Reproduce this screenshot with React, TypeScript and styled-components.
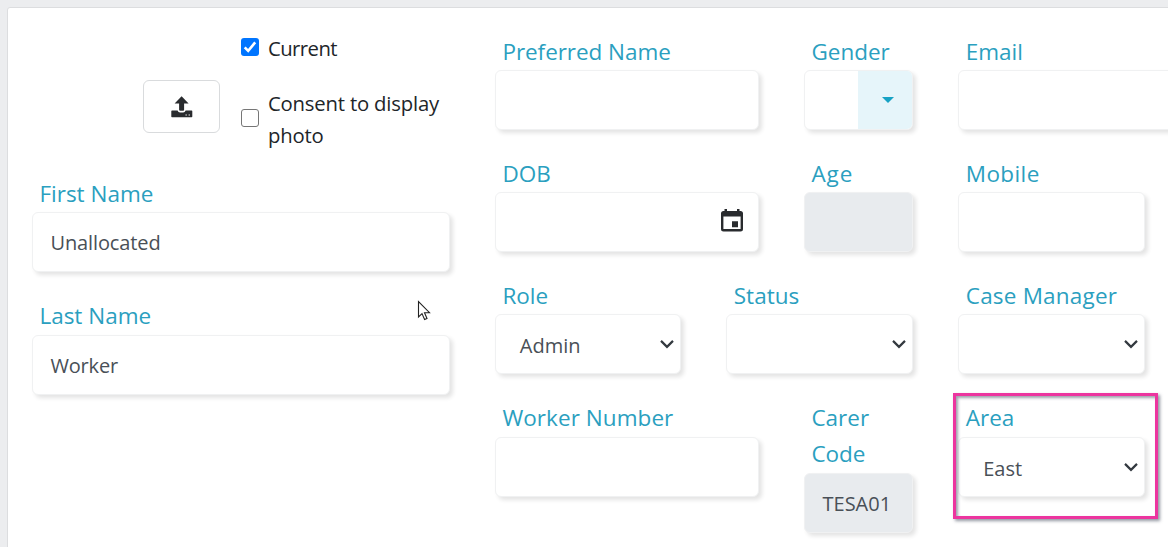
import React from 'react';
import styled, { createGlobalStyle, css } from 'styled-components';

const GlobalStyle = createGlobalStyle`
  * { box-sizing: border-box; }
  body {
    margin: 0;
    background: #ecedef;
    font-family: "Open Sans", "Noto Sans", sans-serif;
    color: #212529;
    overflow: hidden;
  }
`;

const Page = styled.main`
  height: 547px;
  padding: 7px 0 0 7px;
  overflow: hidden;
`;

const Card = styled.section`
  display: flex;
  align-items: flex-start;
  gap: 45px;
  width: 1300px;
  height: 600px;
  padding: 26px 0 0 24px;
  background: #fff;
  border: 1px solid #dcdddf;
  border-radius: 3px;
`;

const LeftColumn = styled.div`
  width: 418px;
  flex: none;
`;

const PhotoRow = styled.div`
  display: flex;
  height: 142px;
  padding-left: 111px;
`;

const UploadButton = styled.button`
  display: flex;
  align-items: center;
  justify-content: center;
  width: 77px;
  height: 53px;
  margin: 46px 21px 0 0;
  padding: 0;
  flex: none;
  background: #fff;
  border: 1px solid #d9dbdd;
  border-radius: 6px;
`;

const Checks = styled.div`
  display: flex;
  flex-direction: column;
  gap: 23px;
  margin-top: -2px;
`;

const CheckLabel = styled.label`
  display: flex;
  align-items: center;
  gap: 9px;
  font-size: 20.3px;
  line-height: 32px;
  width: 210px;
`;

const CheckBox = styled.span<{ $checked?: boolean }>`
  display: flex;
  width: 18px;
  height: 18px;
  flex: none;
  margin-top: -3px;
  border-radius: 3px;
  border: 1.5px solid #767676;
  background: #fff;
  ${p => p.$checked && css`
    background: #0075ff;
    border: 0;
  `}
`;

const Text = styled.span<{ $ls?: number }>`
  letter-spacing: ${p => p.$ls ?? 0}px;
  white-space: nowrap;
`;

const RightColumn = styled.div`
  flex: none;
`;

const Field = styled.div<{ $w: number }>`
  position: relative;
  width: ${p => p.$w}px;
  flex: none;
`;

const Label = styled.div`
  padding: 0 0 0.4px 7.4px;
  font-size: 22.5px;
  line-height: 36px;
  color: #2b9fbf;
`;

const Row = styled.div`
  display: flex;
  align-items: flex-start;
  gap: 45px;
  height: 122px;

  &:last-child ${Label} {
    padding-bottom: 1px;
  }
`;

const Box = styled.div<{ $disabled?: boolean; $indent?: number }>`
  display: flex;
  align-items: center;
  justify-content: space-between;
  height: 60px;
  padding-left: ${p => p.$indent ?? 17.5}px;
  overflow: hidden;
  font-size: 20px;
  color: #495057;
  background: ${p => (p.$disabled ? '#e8ebee' : '#fff')};
  border: 1px solid #f0f1f2;
  border-radius: 6px;
  box-shadow: 3px 3px 4px rgba(0, 0, 0, 0.11);
`;

const Spacer = styled.div`
  height: 26px;
`;

const DropButton = styled.span`
  display: flex;
  align-items: center;
  justify-content: center;
  align-self: stretch;
  width: 54.4px;
  margin-left: auto;
  padding-left: 5.4px;
  background: #e6f5fa;
`;

const IconSlot = styled.span<{ $right: number; $lift?: number }>`
  display: flex;
  margin-left: auto;
  margin-right: ${p => p.$right}px;
  padding-bottom: ${p => p.$lift ?? 0}px;
`;

const Value = styled(Text)`
  padding-top: 1px;
`;

const SelectValue = styled(Text)`
  padding-top: 2px;
`;

const Highlight = styled.div`
  position: absolute;
  left: -5.3px;
  top: -7px;
  width: 205px;
  height: 126px;
  border: 3px solid #ec359f;
  box-shadow: 2px 2px 3px rgba(40, 50, 70, 0.5), inset 2px 2px 3px rgba(40, 50, 70, 0.45);
  pointer-events: none;
`;

const Pointer = styled.svg`
  position: absolute;
  left: 417px;
  top: 300px;
`;

const Chevron = () => (
  <IconSlot $right={5.2}>
    <svg width="16" height="12" viewBox="0 0 16 12">
      <path d="M2 2.9 8 8.9 14 2.9" fill="none" stroke="#343a40" strokeWidth="2.2" />
    </svg>
  </IconSlot>
);

const UploadIcon = () => (
  <svg width="22" height="22" viewBox="0 0 22 22">
    <path fill="#292b2e" d="M10.600 0.300 17.600 7.500H13.100V13.800q0 1-1 1h-3q-1 0-1-1V7.500H3.600Z" />
    <path fill="#292b2e" d="M1 14.500H6.600q.6 2 2.500 2h3q1.900 0 2.500-2H20.600q.7 0 .7.7V20.500q0 .7-.7.7H1q-.7 0-.7-.7V15.200q0-.7.7-.7Z" />
    <path fill="#fff" d="M14.500 18.600h1.300v1h-1.300zM17.600 18.600h1.300v1H17.600z" />
  </svg>
);

const CalendarIcon = () => (
  <svg width="22" height="23" viewBox="0 0 22 23">
    <path fill="#292b2e" fillRule="evenodd" d="M3.5 0H6V2H16V0h2.5V2H19.5Q22 2 22 4.5V20Q22 22.5 19.5 22.5H2.5Q0 22.5 0 20V4.5Q0 2 2.5 2H3.5ZM2.4 7.5V20.1H19.6V7.5Z" />
    <path fill="#292b2e" d="M11 12.3h6v6h-6z" />
  </svg>
);

interface SelectProps {
  label: string;
  width: number;
  value?: string;
  spacing?: number;
  children?: React.ReactNode;
}

const SelectField = ({ label, width, value, spacing, children }: SelectProps) => (
  <Field $w={width}>
    <Label><Text $ls={spacing}>{label}</Text></Label>
    <Box $indent={23.8}>
      {value && <SelectValue>{value}</SelectValue>}
      <Chevron />
    </Box>
    {children}
  </Field>
);

export default function App() {
  return (
    <>
      <GlobalStyle />
      <Page>
        <Card>
          <LeftColumn>
            <PhotoRow>
              <UploadButton aria-label="Upload photo"><UploadIcon /></UploadButton>
              <Checks>
                <CheckLabel>
                  <CheckBox $checked>
                    <svg width="18" height="18" viewBox="0 0 18 18">
                      <path d="M3.7 9.3 7.2 12.8 14.2 4.4" fill="none" stroke="#fff" strokeWidth="2.6" />
                    </svg>
                  </CheckBox>
                  <Text $ls={-0.55}>Current</Text>
                </CheckLabel>
                <CheckLabel>
                  <CheckBox />
                  <Text $ls={-0.18}>Consent to display<br />photo</Text>
                </CheckLabel>
              </Checks>
            </PhotoRow>
            <Field $w={418}>
              <Label><Text>First Name</Text></Label>
              <Box><Text $ls={-0.12}>Unallocated</Text></Box>
            </Field>
            <Spacer />
            <Field $w={418}>
              <Label><Text>Last Name</Text></Label>
              <Box><Value $ls={-0.2}>Worker</Value></Box>
            </Field>
          </LeftColumn>
          <RightColumn>
            <Row>
              <Field $w={264}>
                <Label><Text $ls={-0.05}>Preferred Name</Text></Label>
                <Box />
              </Field>
              <Field $w={109.4}>
                <Label><Text>Gender</Text></Label>
                <Box>
                  <DropButton>
                    <svg width="12" height="6" viewBox="0 0 12 6"><path d="M0 0H12L6 6Z" fill="#17a2c4" /></svg>
                  </DropButton>
                </Box>
              </Field>
              <Field $w={264}>
                <Label><Text>Email</Text></Label>
                <Box />
              </Field>
            </Row>
            <Row>
              <Field $w={264}>
                <Label><Text>DOB</Text></Label>
                <Box><IconSlot $right={15} $lift={3}><CalendarIcon /></IconSlot></Box>
              </Field>
              <Field $w={109.4}>
                <Label><Text $ls={0.9}>Age</Text></Label>
                <Box $disabled />
              </Field>
              <Field $w={187}>
                <Label><Text $ls={0.4}>Mobile</Text></Label>
                <Box />
              </Field>
            </Row>
            <Row>
              <SelectField label="Role" width={186.4} value="Admin" />
              <SelectField label="Status" width={187} />
              <SelectField label="Case Manager" width={187} spacing={0.2} />
            </Row>
            <Row>
              <Field $w={264}>
                <Label><Text $ls={0.06}>Worker Number</Text></Label>
                <Box />
              </Field>
              <Field $w={109.4}>
                <Label><Text>Carer<br />Code</Text></Label>
                <Box $disabled><Value>TESA01</Value></Box>
              </Field>
              <SelectField label="Area" width={187} value="East">
                <Highlight />
              </SelectField>
            </Row>
          </RightColumn>
        </Card>
        <Pointer width="14" height="22" viewBox="0 0 14 22">
          <path d="M1.5 1.5V17L5 13.6 7.6 19.5 10 18.5 7.5 12.7H12.5Z" fill="#fff" stroke="#222" strokeWidth="1.1" />
        </Pointer>
      </Page>
    </>
  );
}
